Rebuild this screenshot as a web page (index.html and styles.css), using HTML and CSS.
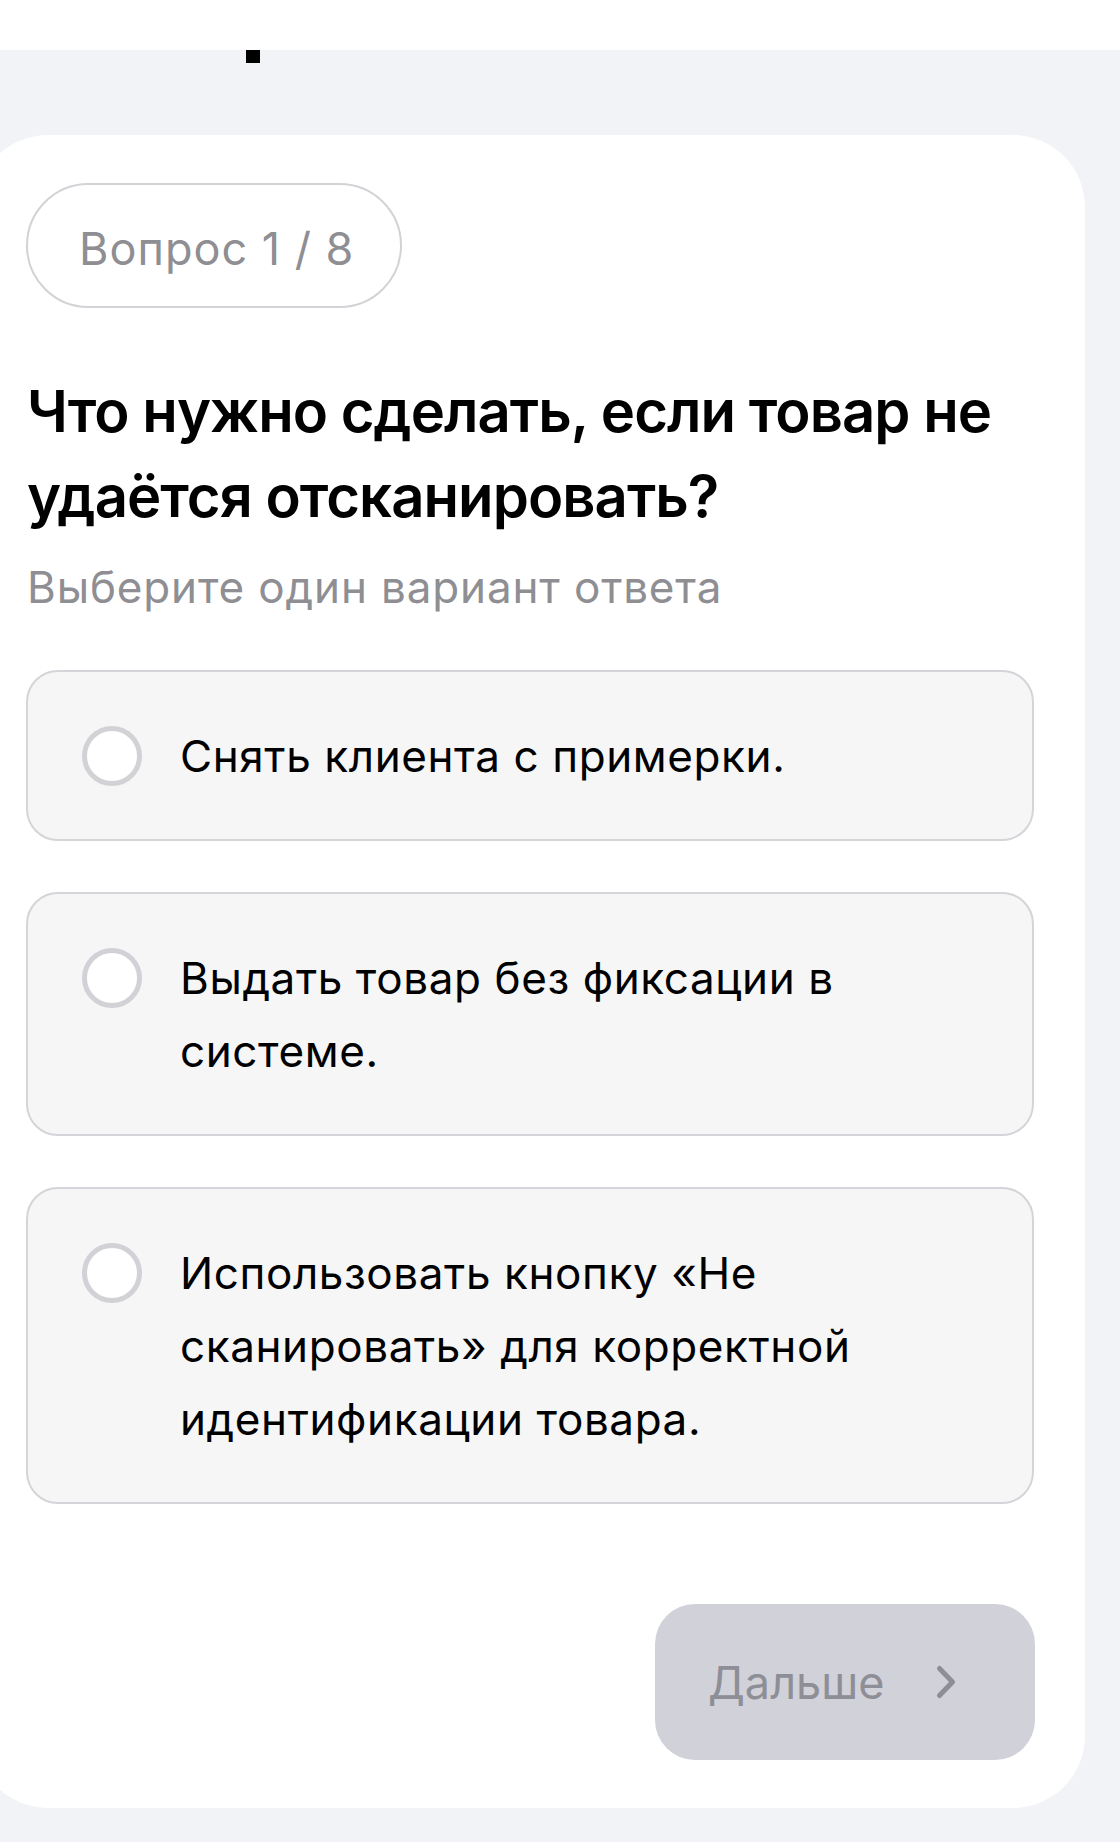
FILE: index.html
```html
<!DOCTYPE html>
<html lang="ru">
<head>
<meta charset="utf-8">
<title>Вопрос 1 / 8</title>
<link rel="stylesheet" href="styles.css">
</head>
<body>
<div class="topbar"><span class="cursor"></span></div>
<main class="card">
  <div class="badge">Вопрос 1 / 8</div>
  <h1 class="title">Что нужно сделать, если товар не удаётся отсканировать?</h1>
  <p class="hint">Выберите один вариант ответа</p>
  <div class="options">
    <label class="option"><span class="radio"></span><span class="option-text">Снять клиента с примерки.</span></label>
    <label class="option"><span class="radio"></span><span class="option-text">Выдать товар без фиксации в системе.</span></label>
    <label class="option"><span class="radio"></span><span class="option-text">Использовать кнопку «Не сканировать» для корректной идентификации товара.</span></label>
  </div>
  <div class="actions">
    <button class="next" type="button">
      <span>Дальше</span>
      <svg class="chev" width="28" height="36" viewBox="0 0 28 36" aria-hidden="true"><path d="M6.5 4.5 L19.5 18 L6.5 31.5" fill="none" stroke="currentColor" stroke-width="5" stroke-linecap="round" stroke-linejoin="round"/></svg>
    </button>
  </div>
</main>
</body>
</html>
```

FILE: styles.css
```css
html, body {
  margin: 0;
  padding: 0;
}
body {
  background: #f2f3f6;
  font-family: Inter, "Noto Sans", sans-serif;
  color: #000;
  width: 1120px;
  min-height: 1842px;
  overflow: hidden;
}
.topbar {
  position: relative;
  height: 50px;
  background: #ffffff;
}
.cursor {
  position: absolute;
  left: 246px;
  top: 50px;
  width: 14px;
  height: 13px;
  background: #000;
}
.card {
  margin: 85px 0 0 -24px;
  width: 1109px;
  box-sizing: border-box;
  background: #ffffff;
  border-radius: 72px;
  padding: 48px 51px 48px 51px;
}
.badge {
  display: inline-flex;
  align-items: center;
  box-sizing: border-box;
  height: 125px;
  padding: 5px 46px 0 51px;
  border: 2px solid #d2d2d7;
  border-radius: 63px;
  font-size: 45px;
  letter-spacing: 1px;
  color: #8e8e93;
  margin-left: -1px;
}
.title {
  margin: 61px 0 0 0;
  font-size: 58px;
  line-height: 85px;
  font-weight: 600;
  letter-spacing: -0.95px;
}
.hint {
  margin: 18px 0 0 0;
  font-size: 44px;
  line-height: 60px;
  letter-spacing: 0.85px;
  color: #8e8e93;
}
.options {
  margin-top: 53px;
  display: flex;
  flex-direction: column;
  gap: 51px;
}
.option {
  display: flex;
  align-items: flex-start;
  gap: 38px;
  background: #f6f6f7;
  border: 2px solid #d4d4d9;
  border-radius: 32px;
  padding: 48px 56px 46px 54px;
  margin-left: -1px;
  width: 1008px;
  box-sizing: border-box;
}
.radio {
  flex: none;
  width: 60px;
  height: 60px;
  box-sizing: border-box;
  border: 5px solid #d1d1d6;
  border-radius: 50%;
  background: #ffffff;
  margin-top: 6px;
}
.option-text {
  font-size: 44px;
  line-height: 73px;
  letter-spacing: 0.6px;
  color: #000;
}
.actions {
  margin-top: 100px;
  display: flex;
  justify-content: flex-end;
}
.next {
  display: flex;
  align-items: center;
  gap: 49px;
  box-sizing: border-box;
  width: 380px;
  height: 156px;
  padding: 0 0 0 53px;
  border: none;
  border-radius: 40px;
  background: #d1d1d9;
  color: #8e8e96;
  font-family: Inter, "Noto Sans", sans-serif;
  font-size: 45px;
  margin-right: -1px;
}
.chev {
  flex: none;
  display: block;
}
```
